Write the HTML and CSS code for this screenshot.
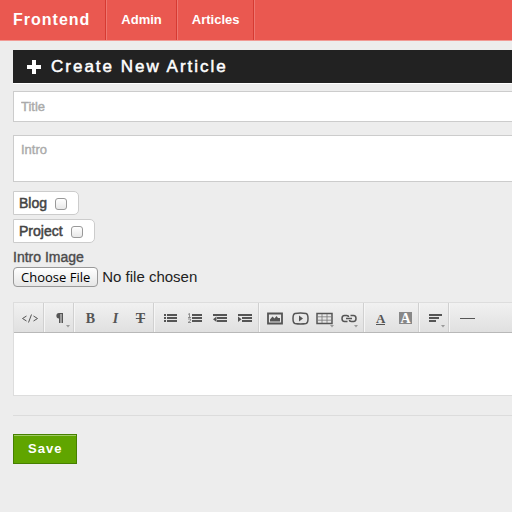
FILE: index.html
```
<!DOCTYPE html>
<html lang="en">
<head>
<meta charset="utf-8">
<title>Create New Article</title>
<link rel="stylesheet" href="styles.css">
</head>
<body>
<nav class="navbar">
  <a class="brand" href="#">Frontend</a>
  <a class="nav-link" href="#">Admin</a>
  <a class="nav-link" href="#">Articles</a>
</nav>
<main class="content">
  <h1 class="heading">
    <svg class="plus" viewBox="0 0 14 14" aria-hidden="true"><path d="M5 0h4v5h5v4H9v5H5V9H0V5h5z"/></svg>
    Create New Article
  </h1>
  <form class="form">
    <input class="field title" type="text" placeholder="Title" aria-label="Title">
    <textarea class="field intro" placeholder="Intro" aria-label="Intro"></textarea>
    <label class="check">Blog <input type="checkbox"></label>
    <label class="check">Project <input type="checkbox"></label>
    <label class="file-label" for="image">Intro Image</label>
    <input class="file" type="file" id="image">

    <div class="editor">
      <div class="toolbar">
        <div class="group">
          <button type="button" class="tool" aria-label="HTML"><svg viewBox="0 0 25 30"><path class="line" d="M8.500 13l-4 2.500 4 2.500M15.500 13l4 2.500-4 2.500M13.500 11.500l-3 8"/></svg></button>
        </div>
        <div class="group">
          <button type="button" class="tool" aria-label="Formatting"><svg viewBox="0 0 25 30"><path d="M15 10v10h-1.500v-9h-1v9H11v-4.500C7.500 15.500 7.500 10 11 10z"/><path class="caret" d="M18 22h4l-2 2.500z"/></svg></button>
        </div>
        <div class="group">
          <button type="button" class="tool letter bold" aria-label="Bold">B</button>
          <button type="button" class="tool letter italic" aria-label="Italic">I</button>
          <button type="button" class="tool letter strike" aria-label="Deleted">T</button>
        </div>
        <div class="group">
          <button type="button" class="tool" aria-label="Unordered list"><svg viewBox="0 0 25 30"><path d="M6 11h2v2H6zm3 0h10v2H9zM6 14h2v2H6zm3 0h10v2H9zM6 17h2v2H6zm3 0h10v2H9z"/></svg></button>
          <button type="button" class="tool" aria-label="Ordered list"><svg viewBox="0 0 25 30"><path d="M9 11h10v2H9zM9 14h10v2H9zM9 17h10v2H9z"/><path class="thin" d="M5 11.500l1.500-1v4M5 14.500h3M5 16h2.500v1.500L5 19.500h3"/></svg></button>
          <button type="button" class="tool" aria-label="Outdent"><svg viewBox="0 0 25 30"><path d="M5 11h14v2H5zM9 14h10v2H9zM9 17h10v2H9zM8.500 13.500v5.500L5 16.200z"/></svg></button>
          <button type="button" class="tool" aria-label="Indent"><svg viewBox="0 0 25 30"><path d="M5 11h14v2H5zM9 14h10v2H9zM9 17h10v2H9zM5 13.500v5.500L8.500 16.200z"/></svg></button>
        </div>
        <div class="group">
          <button type="button" class="tool" aria-label="Image"><svg viewBox="0 0 25 30"><path class="thick" d="M5 10.500h14v10H5z"/><path d="M7 18.500v-2l2.500-3 2 2 2-2.500 1.500 2h2v3.500z"/></svg></button>
          <button type="button" class="tool" aria-label="Video"><svg viewBox="0 0 25 30"><path class="frame" d="M7 10.500Q12.500 9.500 18 10.500Q20 11 20 15.500T18 20.500Q12.500 21.500 7 20.500Q5 20 5 15.500T7 10.500z"/><path d="M11 12.500v6l4-3z"/></svg></button>
          <button type="button" class="tool" aria-label="Table"><svg viewBox="0 0 25 30"><path class="frame" d="M4 10.500h15v10H4z"/><path class="thin" d="M9 11v9M14 11v9M4 13.800h15M4 17.200h15"/><path class="caret" d="M17 22h4l-2 2.500z"/></svg></button>
          <button type="button" class="tool" aria-label="Link"><svg viewBox="0 0 25 30"><path class="frame" d="M9.500 18.500H6.500Q4 18.500 4 15.500T6.500 12.500h2Q10.500 12.500 10.500 14M12.500 12.500h3Q18 12.500 18 15.500T15.500 18.500h-2Q11.500 18.500 11.500 17M8 15.500h6"/><path class="caret" d="M16 22h4l-2 2.500z"/></svg></button>
        </div>
        <div class="group">
          <button type="button" class="tool letter" aria-label="Font color"><span class="fore">A</span></button>
          <button type="button" class="tool letter" aria-label="Back color"><span class="back">A</span></button>
        </div>
        <div class="group">
          <button type="button" class="tool" aria-label="Alignment"><svg viewBox="0 0 25 30"><path d="M6 11h13v2H6zM6 14h10v2H6zM6 17h7v2H6z"/><path class="caret" d="M18 22h4l-2 2.500z"/></svg></button>
        </div>
        <div class="group">
          <button type="button" class="tool" aria-label="Horizontal rule"><svg viewBox="0 0 25 30"><path class="line" d="M7 15.500h15"/></svg></button>
        </div>
      </div>
      <div class="editor-body" contenteditable="true" role="textbox" aria-label="Article body"></div>
    </div>
    <div class="actions"><button class="save" type="submit">Save</button></div>
  </form>
</main>
</body>
</html>
```
FILE: styles.css
```
* { box-sizing: border-box; }

body {
  margin: 0;
  background: #ededed;
  color: #444;
  font: 13px/20px "Liberation Sans", Arial, sans-serif;
}

.navbar {
  display: flex;
  height: 41px;
  background: #ea5850;
  border-bottom: 1px solid #f29a95;
}

.navbar a {
  display: flex;
  align-items: center;
  border-right: 1px solid #d63a32;
  box-shadow: 1px 0 #ee7771;
  color: #fff;
  font-weight: bold;
  text-decoration: none;
  padding: 0 14px 1px 15px;
}

.navbar .brand {
  padding: 0 15px 1px 13px;
  font-size: 16px;
  letter-spacing: 1px;
}

.content { padding: 9px 0 0 13px; }

.heading {
  display: flex;
  align-items: center;
  gap: 10px;
  height: 33px;
  margin: 0 0 8px;
  padding-left: 14px;
  background: #222;
  box-shadow: 0 1px #fff;
  color: #fff;
  font-size: 17px;
  font-weight: normal;
  letter-spacing: 2px;
  -webkit-text-stroke: 0.5px #fff;
}

.plus {
  width: 14px;
  height: 14px;
  fill: #fff;
}

.form {
  display: flex;
  flex-direction: column;
  align-items: flex-start;
}

.field {
  width: 100%;
  border: 1px solid #ccc;
  border-right: 0;
  border-radius: 0;
  background: #fff;
  padding: 4px 7px;
  color: #444;
  font: inherit;
  resize: none;
}

.field::placeholder { color: #aaa; -webkit-text-stroke: 0.4px #aaa; }

.title { height: 31px; margin-bottom: 13px; }
.intro { height: 47px; margin-bottom: 9px; }

.check {
  display: flex;
  align-items: center;
  gap: 8px;
  height: 24px;
  margin-bottom: 4px;
  padding: 0 11px 0 5px;
  background: #fff;
  border: 1px solid #ccc;
  border-radius: 0 5px 5px 0;
  font-size: 14px;
  -webkit-text-stroke: 0.5px #444;
}

.check input {
  appearance: none;
  width: 12px;
  height: 12px;
  margin: 2px 0 0;
  border: 1px solid #999;
  border-radius: 3px;
  background: linear-gradient(#fff, #e8e8e8);
}

.check input:checked { background: #888; }

.file-label {
  height: 20px;
  font-size: 14px;
  -webkit-text-stroke: 0.4px #555;
}

.file {
  height: 21px;
  color: #222;
  font-size: 15px;
  line-height: 20px;
}

.file::file-selector-button {
  height: 20px;
  margin: 0 4px 0 0;
  padding: 0 7px;
  border: 1px solid #999;
  border-radius: 4px;
  background: linear-gradient(#fff, #e6e6e6);
  color: #000;
  font: 13px/18px "Open Sans", sans-serif;
}

.editor {
  width: 100%;
  margin-top: 14px;
  border: 1px solid #ddd;
  border-right: 0;
}

.toolbar {
  display: flex;
  height: 30px;
  background: linear-gradient(#f1f1f1, #e0e0e0);
  border-bottom: 1px solid #b8b8b8;
  overflow: hidden;
}

.group {
  display: flex;
  padding-left: 4px;
  border-right: 1px solid #d0d0d0;
  box-shadow: 1px 0 #f6f6f6;
}

.group:last-child { border: 0; box-shadow: none; }

.tool {
  width: 25px;
  height: 30px;
  padding: 0;
  border: 0;
  background: none;
  color: #555;
}

.tool svg { display: block; width: 25px; height: 30px; fill: #555; }
.tool .line { fill: none; stroke: #555; stroke-width: 1; }
.tool .thin { fill: none; stroke: #777; stroke-width: 0.8; }
.tool .thick { fill: none; stroke: #555; stroke-width: 1.8; }
.tool .frame { fill: none; stroke: #555; stroke-width: 1.5; }
.tool .caret { fill: #999; }

.letter { padding-top: 1px; font: bold 14px/29px "Liberation Serif", serif; }
.italic { font-style: italic; }
.strike { text-decoration: line-through; }

.fore {
  display: inline-block;
  width: 9px;
  height: 12px;
  border-bottom: 1px solid #555;
  font-size: 13px;
  line-height: 11px;
}

.back {
  display: inline-block;
  width: 13px;
  height: 12px;
  background: #888;
  color: #fff;
  line-height: 13px;
}

.editor-body { height: 62px; background: #fff; outline: 0; }

.actions {
  width: 100%;
  margin-top: 19px;
  padding-top: 18px;
  border-top: 1px solid #dcdcdc;
}

.save {
  height: 30px;
  padding: 0 14px;
  background: #60a500;
  border: 1px solid #468000;
  box-shadow: inset 0 1px #a0c966;
  color: #fff;
  font: bold 13px/20px "Liberation Sans", Arial, sans-serif;
  letter-spacing: 1px;
}
```
